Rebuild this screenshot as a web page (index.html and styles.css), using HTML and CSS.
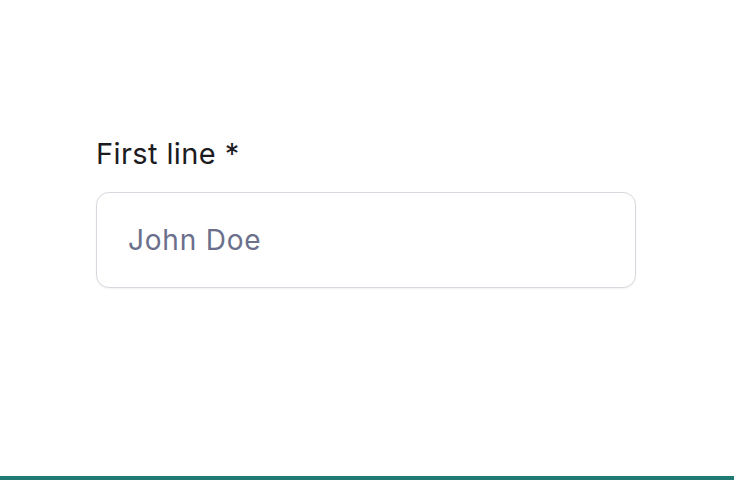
FILE: index.html
```html
<!DOCTYPE html>
<html>
<head>
<meta charset="utf-8">
<link rel="stylesheet" href="styles.css">
</head>
<body>
<div class="page">
  <div class="field">
    <label class="label" for="first">First line *</label>
    <input class="input" id="first" type="text" placeholder="John Doe">
  </div>
</div>
<div class="bar"></div>
</body>
</html>
```
FILE: styles.css
```css
html, body {
  margin: 0;
  padding: 0;
  background: #ffffff;
  height: 100%;
}
body {
  display: flex;
  flex-direction: column;
  font-family: "Inter", "Liberation Sans", sans-serif;
}
.page {
  flex: 1;
  padding: 132px 98px 0 96px;
}
.field {
  display: flex;
  flex-direction: column;
  gap: 16px;
  width: 540px;
}
.label {
  font-size: 29px;
  line-height: 44px;
  color: #1c1c1f;
  letter-spacing: 0.4px;
}
.input {
  box-sizing: border-box;
  width: 540px;
  height: 96px;
  border: 1px solid #d8d8e0;
  border-radius: 13px;
  padding: 0 31px;
  font-family: inherit;
  font-size: 28px;
  letter-spacing: 0.8px;
  color: #1c1c1f;
  outline: none;
  box-shadow: 0 1px 2px rgba(0,0,0,0.05);
}
.input::placeholder {
  color: #6b6f8c;
}
.bar {
  height: 4px;
  background: #217a72;
}
```
